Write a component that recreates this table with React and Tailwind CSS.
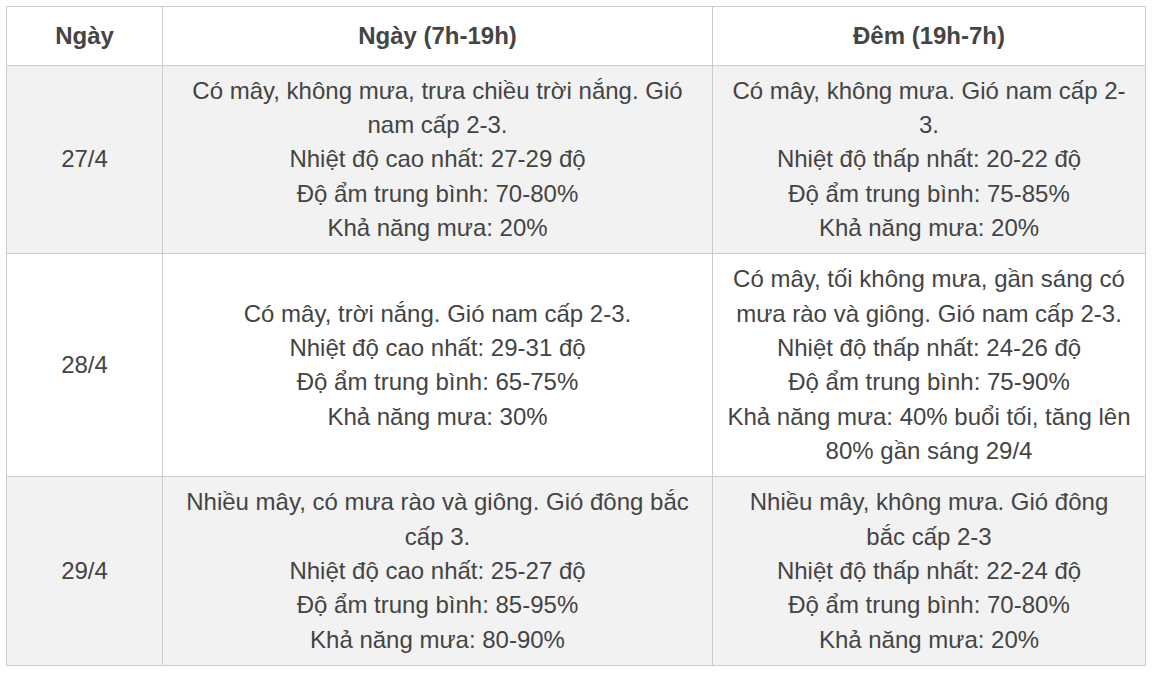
import React from 'react'

const rows = [
  {
    date: '27/4',
    day: [
      'Có mây, không mưa, trưa chiều trời nắng. Gió',
      'nam cấp 2-3.',
      'Nhiệt độ cao nhất: 27-29 độ',
      'Độ ẩm trung bình: 70-80%',
      'Khả năng mưa: 20%',
    ],
    night: [
      'Có mây, không mưa. Gió nam cấp 2-',
      '3.',
      'Nhiệt độ thấp nhất: 20-22 độ',
      'Độ ẩm trung bình: 75-85%',
      'Khả năng mưa: 20%',
    ],
  },
  {
    date: '28/4',
    day: [
      'Có mây, trời nắng. Gió nam cấp 2-3.',
      'Nhiệt độ cao nhất: 29-31 độ',
      'Độ ẩm trung bình: 65-75%',
      'Khả năng mưa: 30%',
    ],
    night: [
      'Có mây, tối không mưa, gần sáng có',
      'mưa rào và giông. Gió nam cấp 2-3.',
      'Nhiệt độ thấp nhất: 24-26 độ',
      'Độ ẩm trung bình: 75-90%',
      'Khả năng mưa: 40% buổi tối, tăng lên',
      '80% gần sáng 29/4',
    ],
  },
  {
    date: '29/4',
    day: [
      'Nhiều mây, có mưa rào và giông. Gió đông bắc',
      'cấp 3.',
      'Nhiệt độ cao nhất: 25-27 độ',
      'Độ ẩm trung bình: 85-95%',
      'Khả năng mưa: 80-90%',
    ],
    night: [
      'Nhiều mây, không mưa. Gió đông',
      'bắc cấp 2-3',
      'Nhiệt độ thấp nhất: 22-24 độ',
      'Độ ẩm trung bình: 70-80%',
      'Khả năng mưa: 20%',
    ],
  },
]

const Lines = ({ lines }) => (
  <>
    {lines.map((l, i) => (
      <div key={i} className="whitespace-nowrap">{l}</div>
    ))}
  </>
)

export default function App() {
  return (
    <div className="min-h-[675px] bg-white pt-[6px] pl-[6px]" style={{ fontFamily: '"Liberation Sans", Arial, sans-serif' }}>
      <table className="w-[1139px] table-fixed border-collapse text-center text-[24px] leading-[34.4px] text-[#444]">
        <colgroup>
          <col className="w-[156px]" />
          <col className="w-[550px]" />
          <col className="w-[433px]" />
        </colgroup>
        <thead>
          <tr className="bg-white">
            <th className="border border-[#cccccc] py-[11.75px] font-bold">Ngày</th>
            <th className="border border-[#cccccc] py-[11.75px] font-bold">Ngày (7h-19h)</th>
            <th className="border border-[#cccccc] py-[11.75px] font-bold">Đêm (19h-7h)</th>
          </tr>
        </thead>
        <tbody>
          {rows.map((r, i) => (
            <tr key={r.date} className={i % 2 === 0 ? 'bg-[#f2f2f2]' : 'bg-white'}>
              <td className="border border-[#cccccc] py-[7.75px] align-middle">{r.date}</td>
              <td className="border border-[#cccccc] py-[7.75px] align-middle"><Lines lines={r.day} /></td>
              <td className="border border-[#cccccc] py-[7.75px] align-middle"><Lines lines={r.night} /></td>
            </tr>
          ))}
        </tbody>
      </table>
    </div>
  )
}
